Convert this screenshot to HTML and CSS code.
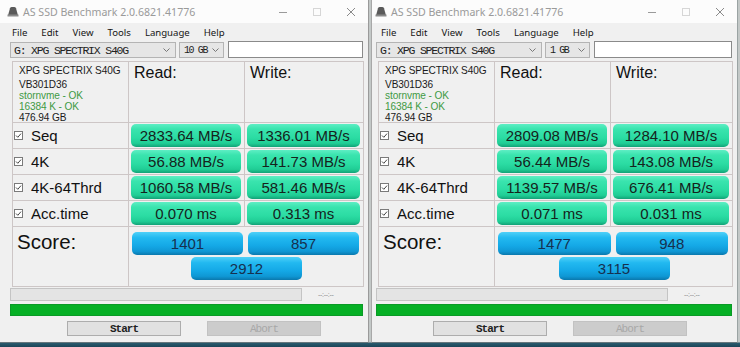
FILE: index.html
```html
<!DOCTYPE html>
<html>
<head>
<meta charset="utf-8">
<link rel="stylesheet" href="styles.css">
</head>
<body>
<div class="window w-left">
  <div class="titlebar">
    <svg class="app-icon" width="12" height="11" viewBox="0 0 12 11"><path d="M1 9.5 L3 2.2 Q3.4 1 4.8 1 L7.2 1 Q8.6 1 9 2.2 L11 9.5 Z" fill="#5a5a5a"/><rect x="0.5" y="8.5" width="11" height="2" fill="#8a8a8a"/></svg>
    <span class="title">AS SSD Benchmark 2.0.6821.41776</span>
    <div class="caption">
      <span class="cap"><svg width="10" height="10" viewBox="0 0 10 10"><line x1="1" y1="5.5" x2="9" y2="5.5" stroke="#9a9a9a" stroke-width="1"/></svg></span>
      <span class="cap"><svg width="10" height="10" viewBox="0 0 10 10"><rect x="1.5" y="1.5" width="7" height="7" fill="none" stroke="#d6d6d6" stroke-width="1"/></svg></span>
      <span class="cap"><svg width="10" height="10" viewBox="0 0 10 10"><path d="M1 1 L9 9 M9 1 L1 9" stroke="#8a8a8a" stroke-width="1"/></svg></span>
    </div>
  </div>
  <div class="menubar"><span>File</span><span>Edit</span><span>View</span><span>Tools</span><span>Language</span><span>Help</span></div>
  <div class="content">
    <div class="toolbar">
      <div class="combo drive"><span class="combo-text">G: XPG SPECTRIX S40G</span><svg width="7" height="5" viewBox="0 0 7 5"><polyline points="0.5,0.5 3.5,3.5 6.5,0.5" fill="none" stroke="#777" stroke-width="1"/></svg></div>
      <div class="combo size"><span class="combo-text">10 GB</span><svg width="7" height="5" viewBox="0 0 7 5"><polyline points="0.5,0.5 3.5,3.5 6.5,0.5" fill="none" stroke="#777" stroke-width="1"/></svg></div>
      <div class="textbox"></div>
    </div>
    <div class="grid">
      <div class="cell info">
        <div class="info-name">XPG SPECTRIX S40G</div>
        <div>VB301D36</div>
        <div class="ok">stornvme - OK</div>
        <div class="ok">16384 K - OK</div>
        <div>476.94 GB</div>
      </div>
      <div class="cell head">Read:</div>
      <div class="cell head">Write:</div>

      <div class="cell label"><svg class="chk" width="9" height="9" viewBox="0 0 9 9"><rect x="0.5" y="0.5" width="8" height="8" fill="#fff" stroke="#7a7a7a"/><polyline points="2,4.5 3.8,6.3 7,2.6" fill="none" stroke="#444" stroke-width="1"/></svg>Seq</div>
      <div class="cell val"><div class="gbox">2833.64 MB/s</div></div>
      <div class="cell val"><div class="gbox">1336.01 MB/s</div></div>

      <div class="cell label"><svg class="chk" width="9" height="9" viewBox="0 0 9 9"><rect x="0.5" y="0.5" width="8" height="8" fill="#fff" stroke="#7a7a7a"/><polyline points="2,4.5 3.8,6.3 7,2.6" fill="none" stroke="#444" stroke-width="1"/></svg>4K</div>
      <div class="cell val"><div class="gbox">56.88 MB/s</div></div>
      <div class="cell val"><div class="gbox">141.73 MB/s</div></div>

      <div class="cell label"><svg class="chk" width="9" height="9" viewBox="0 0 9 9"><rect x="0.5" y="0.5" width="8" height="8" fill="#fff" stroke="#7a7a7a"/><polyline points="2,4.5 3.8,6.3 7,2.6" fill="none" stroke="#444" stroke-width="1"/></svg>4K-64Thrd</div>
      <div class="cell val"><div class="gbox">1060.58 MB/s</div></div>
      <div class="cell val"><div class="gbox">581.46 MB/s</div></div>

      <div class="cell label"><svg class="chk" width="9" height="9" viewBox="0 0 9 9"><rect x="0.5" y="0.5" width="8" height="8" fill="#fff" stroke="#7a7a7a"/><polyline points="2,4.5 3.8,6.3 7,2.6" fill="none" stroke="#444" stroke-width="1"/></svg>Acc.time</div>
      <div class="cell val"><div class="gbox">0.070 ms</div></div>
      <div class="cell val"><div class="gbox">0.313 ms</div></div>

      <div class="cell score-label">Score:</div>
      <div class="cell score">
        <div class="bbox">1401</div>
        <div class="bbox">857</div>
        <div class="bbox total">2912</div>
      </div>
    </div>
    <div class="status"><div class="progress"></div><span class="time">--:--:--</span></div>
    <div class="greenbar"></div>
    <div class="buttons"><div class="btn">Start</div><div class="btn disabled">Abort</div></div>
  </div>
</div>

<div class="window w-right">
  <div class="titlebar">
    <svg class="app-icon" width="12" height="11" viewBox="0 0 12 11"><path d="M1 9.5 L3 2.2 Q3.4 1 4.8 1 L7.2 1 Q8.6 1 9 2.2 L11 9.5 Z" fill="#5a5a5a"/><rect x="0.5" y="8.5" width="11" height="2" fill="#8a8a8a"/></svg>
    <span class="title">AS SSD Benchmark 2.0.6821.41776</span>
    <div class="caption">
      <span class="cap"><svg width="10" height="10" viewBox="0 0 10 10"><line x1="1" y1="5.5" x2="9" y2="5.5" stroke="#9a9a9a" stroke-width="1"/></svg></span>
      <span class="cap"><svg width="10" height="10" viewBox="0 0 10 10"><rect x="1.5" y="1.5" width="7" height="7" fill="none" stroke="#d6d6d6" stroke-width="1"/></svg></span>
      <span class="cap"><svg width="10" height="10" viewBox="0 0 10 10"><path d="M1 1 L9 9 M9 1 L1 9" stroke="#8a8a8a" stroke-width="1"/></svg></span>
    </div>
  </div>
  <div class="menubar"><span>File</span><span>Edit</span><span>View</span><span>Tools</span><span>Language</span><span>Help</span></div>
  <div class="content">
    <div class="toolbar">
      <div class="combo drive"><span class="combo-text">G: XPG SPECTRIX S40G</span><svg width="7" height="5" viewBox="0 0 7 5"><polyline points="0.5,0.5 3.5,3.5 6.5,0.5" fill="none" stroke="#777" stroke-width="1"/></svg></div>
      <div class="combo size"><span class="combo-text">1 GB</span><svg width="7" height="5" viewBox="0 0 7 5"><polyline points="0.5,0.5 3.5,3.5 6.5,0.5" fill="none" stroke="#777" stroke-width="1"/></svg></div>
      <div class="textbox"></div>
    </div>
    <div class="grid">
      <div class="cell info">
        <div class="info-name">XPG SPECTRIX S40G</div>
        <div>VB301D36</div>
        <div class="ok">stornvme - OK</div>
        <div class="ok">16384 K - OK</div>
        <div>476.94 GB</div>
      </div>
      <div class="cell head">Read:</div>
      <div class="cell head">Write:</div>

      <div class="cell label"><svg class="chk" width="9" height="9" viewBox="0 0 9 9"><rect x="0.5" y="0.5" width="8" height="8" fill="#fff" stroke="#7a7a7a"/><polyline points="2,4.5 3.8,6.3 7,2.6" fill="none" stroke="#444" stroke-width="1"/></svg>Seq</div>
      <div class="cell val"><div class="gbox">2809.08 MB/s</div></div>
      <div class="cell val"><div class="gbox">1284.10 MB/s</div></div>

      <div class="cell label"><svg class="chk" width="9" height="9" viewBox="0 0 9 9"><rect x="0.5" y="0.5" width="8" height="8" fill="#fff" stroke="#7a7a7a"/><polyline points="2,4.5 3.8,6.3 7,2.6" fill="none" stroke="#444" stroke-width="1"/></svg>4K</div>
      <div class="cell val"><div class="gbox">56.44 MB/s</div></div>
      <div class="cell val"><div class="gbox">143.08 MB/s</div></div>

      <div class="cell label"><svg class="chk" width="9" height="9" viewBox="0 0 9 9"><rect x="0.5" y="0.5" width="8" height="8" fill="#fff" stroke="#7a7a7a"/><polyline points="2,4.5 3.8,6.3 7,2.6" fill="none" stroke="#444" stroke-width="1"/></svg>4K-64Thrd</div>
      <div class="cell val"><div class="gbox">1139.57 MB/s</div></div>
      <div class="cell val"><div class="gbox">676.41 MB/s</div></div>

      <div class="cell label"><svg class="chk" width="9" height="9" viewBox="0 0 9 9"><rect x="0.5" y="0.5" width="8" height="8" fill="#fff" stroke="#7a7a7a"/><polyline points="2,4.5 3.8,6.3 7,2.6" fill="none" stroke="#444" stroke-width="1"/></svg>Acc.time</div>
      <div class="cell val"><div class="gbox">0.071 ms</div></div>
      <div class="cell val"><div class="gbox">0.031 ms</div></div>

      <div class="cell score-label">Score:</div>
      <div class="cell score">
        <div class="bbox">1477</div>
        <div class="bbox">948</div>
        <div class="bbox total">3115</div>
      </div>
    </div>
    <div class="status"><div class="progress"></div><span class="time">--:--:--</span></div>
    <div class="greenbar"></div>
    <div class="buttons"><div class="btn">Start</div><div class="btn disabled">Abort</div></div>
  </div>
</div>
</body>
</html>
```

FILE: styles.css
```css
* { box-sizing: border-box; }

html, body {
  margin: 0;
  padding: 0;
}

body {
  width: 740px;
  height: 347px;
  overflow: hidden;
  display: flex;
  align-items: flex-start;
  background: linear-gradient(to bottom, #c3c8c7 0, #c3c8c7 342px, #2a5b6e 343px, #1c4558 347px);
  font-family: Arial, "Liberation Sans", sans-serif;
}

.window {
  height: 343px;
  background: #f0f0f0;
  display: flex;
  flex-direction: column;
  border-bottom: 1px solid #66767c;
}

.w-left {
  width: 369px;
  border-right: 1px solid #9a9a9a;
  --title-pl: 7px;
  --menu-pl: 12px;
  --pl: 10px;
  --pr: 5px;
}

.w-right {
  width: 367px;
  margin-left: 2px;
  border-left: 1px solid #a8a8a8;
  border-right: 1px solid #9aa3a3;
  --title-pl: 3px;
  --menu-pl: 9px;
  --pl: 4px;
  --pr: 5px;
}

/* Title bar */
.titlebar {
  height: 23px;
  background: #fcfcfc;
  display: flex;
  align-items: center;
  padding-left: var(--title-pl);
}

.app-icon {
  display: block;
  flex: none;
}

.title {
  margin-left: 4px;
  font-family: "Noto Sans", "Open Sans", sans-serif;
  font-size: 10.6px;
  color: #9a9a9a;
  white-space: nowrap;
}

.caption {
  margin-left: auto;
  display: flex;
  height: 100%;
}

.cap {
  width: 34px;
  height: 100%;
  display: flex;
  align-items: center;
  justify-content: center;
}

/* Menu */
.menubar {
  height: 18px;
  display: flex;
  align-items: center;
  gap: 14px;
  padding-left: var(--menu-pl);
  font-family: "Noto Sans", "Open Sans", sans-serif;
  font-size: 9.6px;
  color: #151515;
}

.content {
  padding: 0 var(--pr) 0 var(--pl);
  display: flex;
  flex-direction: column;
}

/* Toolbar */
.toolbar {
  height: 18px;
  display: flex;
  align-items: flex-start;
  gap: 3px;
}

.combo {
  margin-top: 1px;
  height: 16px;
  border: 1px solid #b4b4b4;
  background: #e6e6e6;
  display: flex;
  align-items: center;
  justify-content: space-between;
  padding: 0 5px 0 3px;
  color: #222;
  white-space: nowrap;
}

.combo-text {
  font-family: "Liberation Mono", "DejaVu Sans Mono", monospace;
  font-size: 11.5px;
  letter-spacing: -1.2px;
}

.combo svg { flex: none; }

.combo.drive { width: 166px; }
.combo.size { width: 45px; padding: 0 4px 0 4px; }
.combo.size .combo-text { font-size: 10px; letter-spacing: -1.4px; }

.textbox {
  flex: 1;
  height: 17px;
  margin-left: 1px;
  background: #ffffff;
  border: 1px solid #8a8a8a;
}

/* Grid */
.grid {
  margin: 2px -1px 0 2px;
  display: grid;
  grid-template-columns: 116px 116px 1fr;
  grid-template-rows: 61px repeat(4, 26px) 60px;
  border-top: 1px solid #cdc6c6;
  border-left: 1px solid #cdc6c6;
}

.cell {
  border-right: 1px solid #cdc6c6;
  border-bottom: 1px solid #cdc6c6;
  background: #f0f0f0;
  min-width: 0;
}

.info {
  padding: 3px 0 0 6px;
  font-size: 10.1px;
  line-height: 11px;
  color: #1a1a1a;
  letter-spacing: -0.1px;
  white-space: nowrap;
}

.info-name {
  margin-bottom: 3px;
}

.info .ok {
  color: #3f9a44;
}

.head {
  padding: 1px 0 0 5px;
  font-size: 16px;
  line-height: 19px;
  color: #111;
}

.label {
  display: flex;
  align-items: center;
  padding-left: 1px;
  font-size: 15px;
  color: #111;
  white-space: nowrap;
}

.chk {
  flex: none;
  margin-right: 8px;
}

.val {
  padding: 1px 3px 1px 2px;
}

.gbox {
  height: 100%;
  border-radius: 5px;
  background: linear-gradient(to bottom, #5eeec4 0%, #3ae4ae 22%, #2bdca3 60%, #20cd95 84%, #12a277 100%);
  display: flex;
  align-items: center;
  justify-content: center;
  font-size: 15px;
  color: #15231c;
  white-space: nowrap;
}

.score-label {
  padding: 3px 0 0 4px;
  font-size: 20.5px;
  line-height: 23px;
  color: #111;
}

.score {
  grid-column: 2 / 4;
  display: grid;
  grid-template-columns: 1fr 1fr;
  grid-template-rows: 23px 23px;
  column-gap: 5px;
  row-gap: 2px;
  padding: 5px 4px 0 3px;
}

.bbox {
  border-radius: 5px;
  background: linear-gradient(to bottom, #4fd0f8 0%, #22b9f0 25%, #14a8e6 60%, #0f97d4 84%, #0a78ad 100%);
  display: flex;
  align-items: center;
  justify-content: center;
  font-size: 15px;
  color: #16304f;
}

.bbox.total {
  grid-column: 1 / 3;
  justify-self: center;
  width: 111px;
  margin-left: 2px;
}

/* Status */
.status {
  margin-top: 1px;
  height: 13px;
  display: flex;
  align-items: center;
}

.progress {
  width: 292px;
  height: 13px;
  background: #e4e4e4;
  border: 1px solid #c4c4c4;
}

.time {
  margin-left: 16px;
  font-size: 7px;
  color: #8a8a8a;
  letter-spacing: -0.3px;
}

.greenbar {
  margin-top: 3px;
  height: 12px;
  background: #06b025;
  border: 1px solid #0a9a26;
}

.buttons {
  margin-top: 5px;
  display: flex;
  gap: 26px;
  padding-left: 57px;
}

.btn {
  width: 114px;
  height: 15px;
  background: #e1e1e1;
  border: 1px solid #adadad;
  display: flex;
  align-items: center;
  justify-content: center;
  font-family: "Liberation Mono", "DejaVu Sans Mono", monospace;
  font-size: 11px;
  font-weight: bold;
  letter-spacing: -1px;
  color: #222;
}

.btn.disabled {
  background: #cccccc;
  border-color: #c2c2c2;
  color: #a8a8a8;
  font-weight: normal;
}
```
